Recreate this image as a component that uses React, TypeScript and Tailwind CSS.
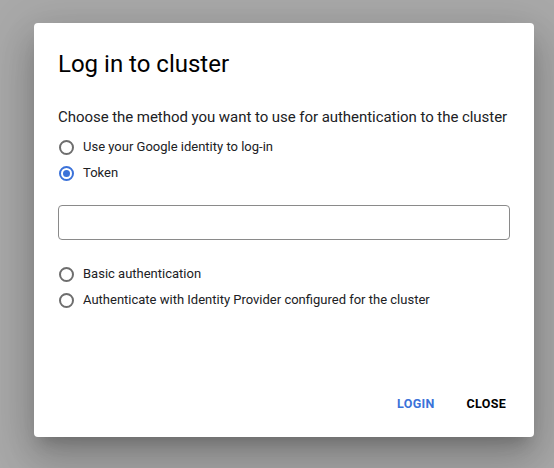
import React, { useState } from "react";

const options = [
  { id: "google", label: "Use your Google identity to log-in" },
  { id: "token", label: "Token" },
  { id: "basic", label: "Basic authentication" },
  { id: "idp", label: "Authenticate with Identity Provider configured for the cluster" },
];

function Radio({ checked, label, onClick }: { checked: boolean; label: string; onClick: () => void }) {
  return (
    <button onClick={onClick} className="flex h-[26px] items-center gap-[9px] text-left">
      <span
        className={
          "flex h-[15px] w-[15px] items-center justify-center rounded-full border-2 " +
          (checked ? "border-[#3b72d9]" : "border-[#6e6e6e]")
        }
      >
        {checked && <span className="h-[7px] w-[7px] rounded-full bg-[#3b72d9]" />}
      </span>
      <span className="text-[13px] text-[#202124]">{label}</span>
    </button>
  );
}

export default function App() {
  const [method, setMethod] = useState("token");

  return (
    <div className="h-[468px] w-[554px] bg-[#a9a9a9] pt-[23px] pl-[34px] font-['Roboto',sans-serif]">
      <div className="flex h-[414px] w-[500px] flex-col rounded-[4px] bg-white px-6 shadow-[0_11px_15px_-7px_rgba(0,0,0,0.2),0_24px_38px_3px_rgba(0,0,0,0.14),0_9px_46px_8px_rgba(0,0,0,0.12)]">
        <h2 className="pt-[25px] text-[24px] leading-[32px] text-black">Log in to cluster</h2>

        <p className="mt-[25px] whitespace-nowrap text-[15px] leading-[24px] tracking-[-0.05px] text-[#202124]">
          Choose the method you want to use for authentication to the cluster
        </p>

        <div className="mt-[5px] flex flex-col pl-[1px]">
          <Radio checked={method === "google"} label={options[0].label} onClick={() => setMethod("google")} />
          <Radio checked={method === "token"} label={options[1].label} onClick={() => setMethod("token")} />
        </div>

        <input className="mt-[19px] h-[35px] w-[452px] rounded-[4px] border border-[#8a8a8a] px-3 text-sm outline-none" />

        <div className="mt-[21px] flex flex-col pl-[1px]">
          <Radio checked={method === "basic"} label={options[2].label} onClick={() => setMethod("basic")} />
          <Radio checked={method === "idp"} label={options[3].label} onClick={() => setMethod("idp")} />
        </div>

        <div className="mt-auto mb-[23px] flex justify-end gap-[32px] pr-[4px]">
          <button className="text-[12.5px] font-bold tracking-[0.3px] text-[#3b72d9]">LOGIN</button>
          <button className="text-[12.5px] font-bold tracking-[0.3px] text-black">CLOSE</button>
        </div>
      </div>
    </div>
  );
}
